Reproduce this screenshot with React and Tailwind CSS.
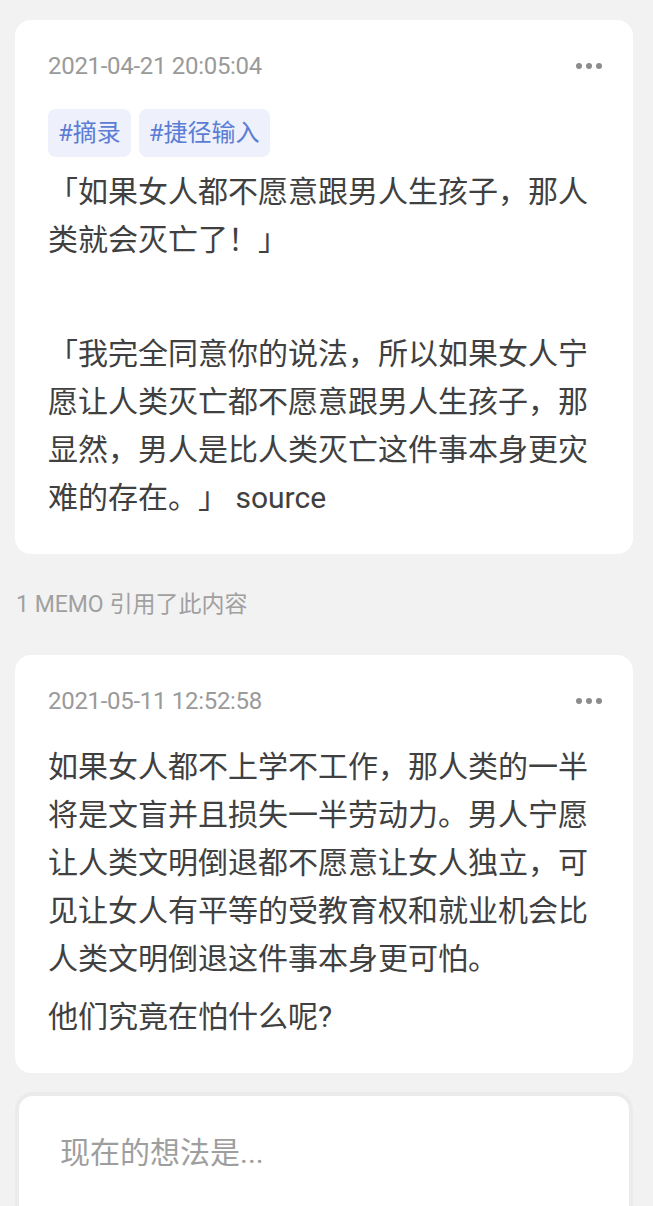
import React from 'react';

const memos = [
  {
    id: 1,
    time: '2021-04-21 20:05:04',
    tags: ['#摘录', '#捷径输入'],
    paragraphs: [
      '「如果女人都不愿意跟男人生孩子，那人类就会灭亡了！」',
      '',
      '「我完全同意你的说法，所以如果女人宁愿让人类灭亡都不愿意跟男人生孩子，那显然，男人是比人类灭亡这件事本身更灾难的存在。」 source',
    ],
  },
  {
    id: 2,
    time: '2021-05-11 12:52:58',
    tags: [],
    paragraphs: [
      '如果女人都不上学不工作，那人类的一半将是文盲并且损失一半劳动力。男人宁愿让人类文明倒退都不愿意让女人独立，可见让女人有平等的受教育权和就业机会比人类文明倒退这件事本身更可怕。',
      '他们究竟在怕什么呢?',
    ],
  },
];

function MoreDots() {
  return (
    <svg width="26" height="6" viewBox="0 0 26 6" className="shrink-0">
      <circle cx="3" cy="3" r="3" fill="#8c8c8c" />
      <circle cx="13" cy="3" r="3" fill="#8c8c8c" />
      <circle cx="23" cy="3" r="3" fill="#8c8c8c" />
    </svg>
  );
}

function MemoCard({ memo }) {
  return (
    <div className="bg-white rounded-2xl pt-[30px] pb-[32px] pl-[33px] pr-[31px]">
      <div className="flex items-center justify-between h-[32px]">
        <span className="text-[24px] tracking-[-0.3px] text-[#9a9a9a]">{memo.time}</span>
        <MoreDots />
      </div>
      {memo.tags.length > 0 && (
        <div className="flex gap-2 mt-[27px] mb-[11px]">
          {memo.tags.map((t) => (
            <span key={t} className="h-12 flex items-center px-[10px] rounded-lg bg-[#eef0fb] text-[#5b7dd6] text-[24px]">
              {t}
            </span>
          ))}
        </div>
      )}
      <div className={memo.tags.length > 0 ? 'flex flex-col gap-[9px]' : 'flex flex-col gap-[10px] mt-[26px]'}>
        {memo.paragraphs.map((p, i) => (
          <p key={i} className="text-[30px] leading-[48px] text-[#404040] min-h-[48px] [text-spacing-trim:space-all]">
            {p}
          </p>
        ))}
      </div>
    </div>
  );
}

export default function App() {
  return (
    <div
      className="min-h-screen bg-[#f2f2f2] pl-[15px] pr-[20px] pt-[20px] pb-10"
      style={{ fontFamily: 'Roboto, "Noto Sans CJK SC", sans-serif' }}
    >
      <MemoCard memo={memos[0]} />
      <div className="mt-[36px] mb-[35px] pl-px text-[23px] leading-[30px] text-[#a0a0a0]">
        1 MEMO 引用了此内容
      </div>
      <MemoCard memo={memos[1]} />
      <div className="mt-[19px] rounded-[18px] border-4 border-[#ebebeb] bg-white">
        <textarea
          placeholder="现在的想法是..."
          className="block w-full h-[220px] resize-none outline-none bg-transparent pl-[41px] pr-8 pt-[33px] text-[30px] leading-[48px] text-[#404040] placeholder:text-[#9e9e9e]"
        />
      </div>
    </div>
  );
}
